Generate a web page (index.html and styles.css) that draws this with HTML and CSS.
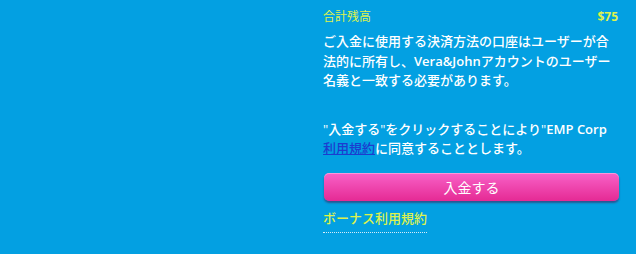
FILE: index.html
```html
<!DOCTYPE html>
<html lang="ja">

<head>
  <meta charset="UTF-8">
  <meta name="viewport" content="width=device-width, initial-scale=1.0">
  <title>入金</title>
  <link rel="stylesheet" href="styles.css">
</head>

<body>
  <div class="page">
    <div class="side"></div>
    <div class="deposit">
      <div class="balance">
        <span class="balance-label">合計残高</span>
        <span class="balance-value">$75</span>
      </div>
      <p class="note">ご入金に使用する決済方法の口座はユーザーが合法的に所有し、<b>Vera&amp;John</b>アカウントのユーザー名義と一致する必要があります。</p>
      <p class="note">"入金する"をクリックすることにより"<b>EMP Corp</b> <a href="javascript:;" class="terms">利用規約</a>に同意することとします。</p>
      <button class="btn-deposit" type="button">入金する</button>
      <a href="javascript:;" class="bonus">ボーナス利用規約</a>
    </div>
  </div>
</body>

</html>
```

FILE: styles.css
```css
* {
  padding: 0px;
  margin: 0px;
  box-sizing: border-box;
}

body {
  background-color: #03a0e2;
  font-family: "Open Sans", "Noto Sans CJK JP", sans-serif;
  color: #ffffff;
}

.page {
  display: grid;
  grid-template-columns: 1fr 296px;
  padding: 8px 17px 0px 0px;
  min-height: 254px;
}

.deposit {
  display: flex;
  flex-direction: column;
  align-items: flex-start;
}

.balance {
  display: flex;
  justify-content: space-between;
  width: 100%;
  font-size: 12px;
  line-height: 18px;
  color: #def24c;
}

.balance-value {
  font-weight: 700;
  padding-right: 1px;
}

.note {
  margin-top: 6px;
  font-size: 13px;
  line-height: 19.5px;
  font-weight: 500;
  width: 292px;
}

.note b {
  font-weight: 600;
}

.note + .note {
  margin-top: 29px;
}

.terms {
  color: #1c3ccf;
  text-decoration: underline;
}

.btn-deposit {
  margin-top: 14px;
  width: 295px;
  height: 28px;
  margin-left: 1px;
  border: none;
  border-radius: 5px;
  background: linear-gradient(#f862c8, #e52a94);
  box-shadow: 0px 2px 2px rgba(80, 0, 50, .45), inset 0px 1px 0px rgba(255, 255, 255, .35);
  color: #ffffff;
  font-family: "Open Sans", "Noto Sans CJK JP", sans-serif;
  font-size: 14px;
  font-weight: 400;
  cursor: pointer;
}

.bonus {
  margin-top: 8px;
  font-size: 13px;
  line-height: 19.5px;
  font-weight: 500;
  color: #def24c;
  text-decoration: none;
  padding-bottom: 4px;
  border-bottom: 1px dotted #d6ecf8;
}
```
